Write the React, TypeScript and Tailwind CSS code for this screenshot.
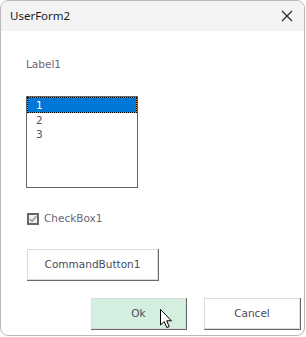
import React from "react";

const tahoma = { fontFamily: '"DejaVu Sans", "Liberation Sans", sans-serif' };

function Btn3D({ children, className, bg }: { children: React.ReactNode; className: string; bg: string }) {
  return (
    <div className={`${className} border-r border-b border-[#6a6a6a]`}>
      <div
        className={`w-full h-full border border-[#dcdcdc] ${bg} flex items-center justify-center text-[10.5px] text-[#4a4a5c]`}
        style={tahoma}
      >
        {children}
      </div>
    </div>
  );
}

export default function App() {
  return (
    <div className="w-[306px] h-[337px] bg-white relative">
      <div className="w-[305px] h-[336px] border border-[#b9b9b9] rounded-[8px] overflow-hidden bg-white flex flex-col">
        <div className="h-[30px] bg-[#f3f3f3] flex items-center justify-between pl-[9px] pr-[10px]">
          <span className="text-[11.5px] text-[#1b1b1b]" style={{ fontFamily: '"Noto Sans", sans-serif' }}>
            UserForm2
          </span>
          <svg width="12" height="12" viewBox="0 0 12 12" className="mr-[1px]">
            <path d="M1 1 L11 11 M11 1 L1 11" stroke="#222" strokeWidth="1.1" fill="none" />
          </svg>
        </div>
        <div className="flex flex-col pl-[25px]">
          <div className="mt-[26px] h-[14px] leading-[14px] text-[10.5px] text-[#686878]" style={tahoma}>
            Label1
          </div>
          <div className="mt-[25px] w-[112px] h-[92px] border border-[#646464] bg-white flex flex-col" style={tahoma}>
            <div className="h-[16px] bg-[#d87c2a]">
              <div className="h-full border border-dotted border-black bg-[#0078d7] bg-clip-padding pl-[8px] text-[10.5px] leading-[14px] text-white">
                1
              </div>
            </div>
            <div className="h-[14px] pl-[9px] text-[10.5px] leading-[14px] text-[#505064]">2</div>
            <div className="h-[14px] pl-[9px] text-[10.5px] leading-[14px] text-[#505064]">3</div>
          </div>
          <div className="mt-[24px] h-[14px] flex items-center pl-[1px]">
            <div className="w-[12px] h-[12px] border-2 border-[#666666] bg-[#f2f2f2] flex items-center justify-center">
              <svg width="8" height="8" viewBox="0 0 8 8">
                <path d="M0.8 4 L3 6.3 L7.3 1.2" stroke="#9a9a9a" strokeWidth="1.5" fill="none" />
              </svg>
            </div>
            <span className="ml-[5px] text-[10.5px] text-[#686878]" style={tahoma}>
              CheckBox1
            </span>
          </div>
          <Btn3D className="mt-[23px] ml-[1px] w-[132px] h-[32px]" bg="bg-white">
            CommandButton1
          </Btn3D>
          <div className="mt-[17px] flex pl-[65px] gap-[17px]">
            <Btn3D className="w-[96px] h-[32px]" bg="bg-[#d4eee0]">
              Ok
            </Btn3D>
            <Btn3D className="w-[97px] h-[32px]" bg="bg-white">
              Cancel
            </Btn3D>
          </div>
        </div>
      </div>
      <svg className="absolute left-[160px] top-[309px]" width="14" height="21" viewBox="0 0 14 21">
        <path
          d="M0.5 0.5 L0.5 16 L4.2 12.6 L6.8 18.6 L9.2 17.6 L6.7 11.8 L11.5 11.8 Z"
          fill="white"
          stroke="black"
          strokeWidth="1"
          strokeLinejoin="round"
        />
      </svg>
    </div>
  );
}
